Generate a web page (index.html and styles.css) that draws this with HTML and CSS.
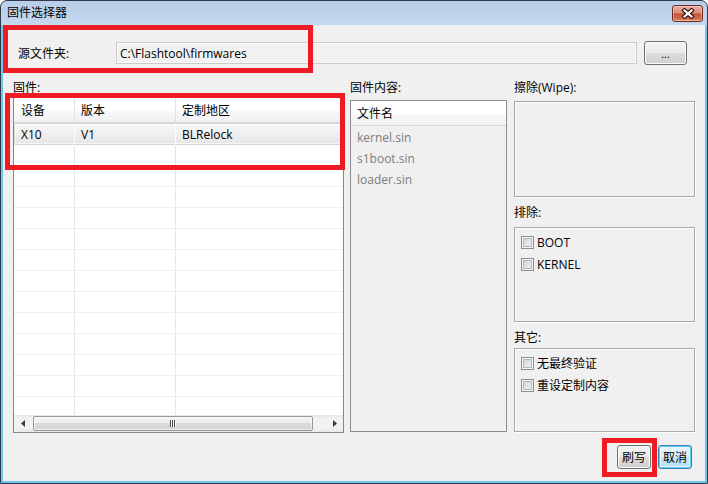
FILE: index.html
```html
<!DOCTYPE html>
<html lang="zh-CN">
<head>
<meta charset="utf-8">
<title>固件选择器</title>
<link rel="stylesheet" href="styles.css">
</head>
<body>
<div class="screen">
  <div class="window">
    <div class="titlebar">
      <span class="title">固件选择器</span>
      <button class="close-btn" aria-label="关闭">
        <svg width="14" height="11" viewBox="0 0 14 11">
          <path d="M3.5 2.5 L10.5 8.5 M10.5 2.5 L3.5 8.5" stroke="#3a1510" stroke-width="4.4" stroke-linecap="square" fill="none"/>
          <path d="M3.5 2.5 L10.5 8.5 M10.5 2.5 L3.5 8.5" stroke="#ffffff" stroke-width="2.2" stroke-linecap="square" fill="none"/>
        </svg>
      </button>
    </div>
    <div class="client">
      <div class="source-row">
        <span class="source-label">源文件夹:</span>
        <div class="path-field">C:\Flashtool\firmwares</div>
        <button class="btn browse-btn">...</button>
      </div>
      <div class="main">
        <section class="fw-col">
          <div class="col-label">固件:</div>
          <div class="fw-table">
            <div class="fw-head">
              <div class="c c1">设备</div>
              <div class="c c2">版本</div>
              <div class="c c3">定制地区</div>
            </div>
            <div class="fw-body">
              <div class="fw-row sel"><div class="c c1">X10</div><div class="c c2">V1</div><div class="c c3">BLRelock</div></div>
              <div class="fw-row"><div class="c c1"></div><div class="c c2"></div><div class="c c3"></div></div>
              <div class="fw-row"><div class="c c1"></div><div class="c c2"></div><div class="c c3"></div></div>
              <div class="fw-row"><div class="c c1"></div><div class="c c2"></div><div class="c c3"></div></div>
              <div class="fw-row"><div class="c c1"></div><div class="c c2"></div><div class="c c3"></div></div>
              <div class="fw-row"><div class="c c1"></div><div class="c c2"></div><div class="c c3"></div></div>
              <div class="fw-row"><div class="c c1"></div><div class="c c2"></div><div class="c c3"></div></div>
              <div class="fw-row"><div class="c c1"></div><div class="c c2"></div><div class="c c3"></div></div>
              <div class="fw-row"><div class="c c1"></div><div class="c c2"></div><div class="c c3"></div></div>
              <div class="fw-row"><div class="c c1"></div><div class="c c2"></div><div class="c c3"></div></div>
              <div class="fw-row"><div class="c c1"></div><div class="c c2"></div><div class="c c3"></div></div>
              <div class="fw-row"><div class="c c1"></div><div class="c c2"></div><div class="c c3"></div></div>
              <div class="fw-row"><div class="c c1"></div><div class="c c2"></div><div class="c c3"></div></div>
              <div class="fw-row"><div class="c c1"></div><div class="c c2"></div><div class="c c3"></div></div>
            </div>
            <div class="hscroll">
              <span class="arrow"><svg width="4" height="7" viewBox="0 0 4 7"><polygon points="4,0 0,3.5 4,7" fill="#3a3a3a"/></svg></span>
              <div class="track">
                <div class="thumb">
                  <svg width="7" height="7" viewBox="0 0 7 7">
                    <rect x="0" y="0" width="1" height="7" fill="#4a4a4a"/><rect x="1" y="0" width="1" height="7" fill="#ffffff"/>
                    <rect x="2" y="0" width="1" height="7" fill="#4a4a4a"/><rect x="3" y="0" width="1" height="7" fill="#ffffff"/>
                    <rect x="4" y="0" width="1" height="7" fill="#4a4a4a"/><rect x="5" y="0" width="1" height="7" fill="#ffffff"/>
                  </svg>
                </div>
              </div>
              <span class="arrow"><svg width="4" height="7" viewBox="0 0 4 7"><polygon points="0,0 4,3.5 0,7" fill="#3a3a3a"/></svg></span>
            </div>
          </div>
        </section>
        <section class="files-col">
          <div class="col-label">固件内容:</div>
          <div class="file-list">
            <div class="file-head">文件名</div>
            <div class="file-item">kernel.sin</div>
            <div class="file-item">s1boot.sin</div>
            <div class="file-item">loader.sin</div>
          </div>
        </section>
        <section class="opts-col">
          <div class="col-label">擦除(Wipe):</div>
          <div class="group wipe-box"></div>
          <div class="col-label label-gap">排除:</div>
          <div class="group exclude-box">
            <label class="check"><span class="cb"></span><span class="check-text">BOOT</span></label>
            <label class="check"><span class="cb"></span><span class="check-text">KERNEL</span></label>
          </div>
          <div class="col-label label-gap">其它:</div>
          <div class="group other-box">
            <label class="check"><span class="cb"></span><span class="check-text">无最终验证</span></label>
            <label class="check"><span class="cb"></span><span class="check-text">重设定制内容</span></label>
          </div>
        </section>
      </div>
      <div class="button-row">
        <button class="btn">刷写</button>
        <button class="btn btn-default">取消</button>
      </div>
    </div>
  </div>
  <div class="mark mark-source"></div>
  <div class="mark mark-table"></div>
  <div class="mark mark-flash"></div>
</div>
</body>
</html>
```
FILE: styles.css
```css
* { box-sizing: border-box; }
html, body { margin: 0; padding: 0; }
body {
  font-family: "Open Sans", "Noto Sans CJK SC", sans-serif;
  font-size: 12px;
  line-height: 16px;
  color: #000;
  background: #fff;
}
.screen { position: relative; width: 708px; height: 484px; overflow: hidden; }

.window {
  width: 708px;
  height: 484px;
  border: 1px solid #2f3b4a;
  border-radius: 7px 7px 0 0;
  background: linear-gradient(#b8cee9, #c4d8ef 24px);
  display: flex;
  flex-direction: column;
  overflow: hidden;
}
.titlebar {
  height: 24px;
  flex: none;
  display: flex;
  align-items: flex-start;
  padding-left: 6px;
}
.title { margin-top: 4px; }
.close-btn {
  margin-left: auto;
  margin-right: 4px;
  margin-top: 4px;
  width: 31px;
  height: 17px;
  padding: 0;
  border: 1px solid #6b2a24;
  border-radius: 3px;
  background: linear-gradient(#e9ab9c 0%, #dc8f7c 45%, #c6533d 52%, #cf6a50 85%, #e29a6c 100%);
  box-shadow: inset 0 0 0 1px rgba(255,255,255,0.35);
  display: flex;
  align-items: center;
  justify-content: center;
}
.close-btn svg { display: block; }

.client {
  flex: 1;
  background: #f0f0f0;
  border: 2px solid #6fc5ea;
  border-top: 0;
  display: flex;
  flex-direction: column;
}

.source-row {
  display: flex;
  align-items: center;
  height: 24px;
  margin-top: 16px;
  padding-left: 15px;
}
.source-label { width: 98px; padding-top: 2px; }
.path-field {
  width: 521px;
  height: 22px;
  padding: 3px 3px 1px;
  border: 1px solid #cbcbcb;
  box-shadow: inset 0 0 0 1px #fafafa;
  background: #f1f1f1;
  white-space: nowrap;
}
.btn {
  font: inherit;
  color: #000;
  width: 34px;
  height: 24px;
  padding: 1px 0 0;
  border: 1px solid #707070;
  border-radius: 3px;
  background: linear-gradient(#f2f2f2 0%, #ebebeb 50%, #dddddd 50%, #cfcfcf 100%);
  box-shadow: inset 0 0 0 1px #fcfcfc;
  line-height: 16px;
}
.browse-btn { width: 43px; margin-left: 7px; font-size: 11px; padding-top: 2px; }
.btn-default {
  border-color: #3c7fb1;
  background: linear-gradient(#eaf6fd 0%, #dcf0fb 50%, #c6e6f8 50%, #b7def5 100%);
  box-shadow: inset 0 0 0 1px #5bd0f6, inset 0 0 0 2px #e6f5fd;
}

.main {
  display: flex;
  align-items: flex-start;
  margin-top: 14px;
  padding: 0 10px;
}
.col-label { height: 16px; padding-top: 1px; line-height: 16px; white-space: nowrap; }

.fw-col { width: 331px; flex: none; }
.fw-table {
  margin-top: 2px;
  height: 336px;
  border: 1px solid #828790;
  background: #fff;
  display: flex;
  flex-direction: column;
}
.fw-head {
  height: 25px;
  flex: none;
  display: flex;
  border-bottom: 1px solid #d5d5d5;
  background: linear-gradient(#ffffff 0%, #ffffff 55%, #f7f8f9 55%, #f0f1f3 100%);
}
.c { padding-left: 6px; padding-top: 1px; display: flex; align-items: center; white-space: nowrap; }
.c1 { width: 61px; padding-left: 7px; }
.c2 { width: 101px; }
.c3 { flex: 1; }
.fw-head .c { border-right: 1px solid #e2e3e5; padding-top: 2px; }
.fw-body { flex: 1; overflow: hidden; }
.fw-row { height: 21px; display: flex; border-bottom: 1px solid #efefef; }
.fw-row .c { border-right: 1px solid #dfe7f4; }
.fw-row .c3 { border-right: 0; }
.fw-row.sel {
  height: 22px;
  border-bottom: 0;
  border-radius: 2px;
  background: linear-gradient(#fafafa, #e4e4e4);
  box-shadow: inset 0 0 0 1px #d6d6d6, inset 0 0 0 2px rgba(255,255,255,0.6);
}
.fw-row.sel .c { border-right-color: rgba(255,255,255,0.8); }

.hscroll {
  height: 17px;
  flex: none;
  display: flex;
  background: linear-gradient(#e8e8e8, #f2f2f2 25%, #f2f2f2 75%, #e9e9e9);
}
.arrow {
  width: 17px;
  height: 17px;
  flex: none;
  display: flex;
  align-items: center;
  justify-content: center;
}
.arrow svg { display: block; }
.track { flex: 1; padding: 1px 0 1px 2px; display: flex; }
.thumb {
  width: 280px;
  height: 15px;
  border: 1px solid #979797;
  border-radius: 2px;
  background: linear-gradient(#f6f6f6 0%, #ececec 50%, #dcdcdc 50%, #d2d2d2 100%);
  box-shadow: inset 0 0 0 1px rgba(255,255,255,0.6);
  display: flex;
  align-items: center;
  justify-content: center;
}
.thumb svg { display: block; }

.files-col { width: 157px; margin-left: 6px; flex: none; }
.file-list {
  margin-top: 5px;
  height: 332px;
  border: 1px solid #8a8d94;
  background: #f0f0f0;
}
.file-head {
  height: 25px;
  display: flex;
  align-items: center;
  padding-left: 6px;
  padding-top: 2px;
  border-bottom: 1px solid #d5d5d5;
  background: linear-gradient(#ffffff 0%, #ffffff 55%, #f7f8f9 55%, #f0f1f3 100%);
}
.file-item { height: 21px; line-height: 21px; padding-left: 6px; padding-top: 1px; color: #7d7d7d; }

.opts-col { width: 181px; margin-left: 7px; flex: none; }
.group {
  border: 1px solid #a9a9a9;
  box-shadow: inset 1px 1px 0 #ffffff, 1px 1px 0 #ffffff;
}
.wipe-box { margin-top: 6px; height: 96px; }
.label-gap { margin-top: 7px; }
.exclude-box { margin-top: 7px; height: 95px; padding: 6px 0 0 6px; }
.other-box { margin-top: 3px; height: 84px; padding: 6px 0 0 6px; }
.check { display: flex; align-items: center; height: 16px; gap: 3px; white-space: nowrap; }
.check + .check { margin-top: 6px; }
.check-text { padding-top: 2px; }
.cb {
  width: 13px;
  height: 13px;
  flex: none;
  border: 1px solid #8e8f8f;
  background: linear-gradient(135deg, #cdd0d4, #f6f6f6);
  box-shadow: inset 0 0 0 1px #f4f4f4, inset 0 0 0 2px #b4b7bb;
}

.button-row {
  display: flex;
  justify-content: flex-end;
  gap: 7px;
  margin-top: 12px;
  padding-right: 13px;
}

.mark {
  position: absolute;
  border: 5px solid #ed1c24;
  pointer-events: none;
}
.mark-source { left: 3px; top: 25px; width: 310px; height: 48px; }
.mark-table { left: 5px; top: 93px; width: 340px; height: 77px; }
.mark-flash { left: 602px; top: 438px; width: 55px; height: 39px; }
```
